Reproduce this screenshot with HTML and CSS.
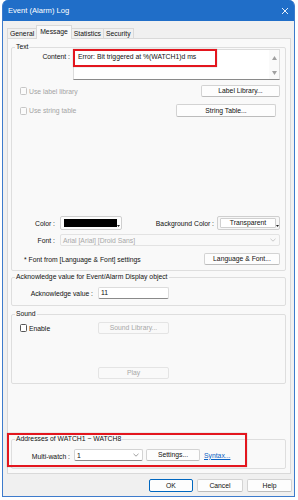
FILE: index.html
```html
<!DOCTYPE html>
<html lang="en">

<head>
    <meta charset="UTF-8">
    <meta name="viewport" content="width=device-width, initial-scale=1.0">
    <title>Event (Alarm) Log</title>
    <link rel="stylesheet" href="styles.css">
</head>

<body>
    <div class="window">
        <div class="titlebar">
            <span class="title">Event (Alarm) Log</span>
            <svg class="close" width="8" height="8" viewBox="0 0 8 8">
                <path d="M1 1L7 7M7 1L1 7" stroke="#fff" stroke-width="0.9" />
            </svg>
        </div>

        <div class="tabs">
            <div class="tab">General</div>
            <div class="tab active">Message</div>
            <div class="tab">Statistics</div>
            <div class="tab">Security</div>
        </div>

        <div class="panel">
            <!-- Text -->
            <fieldset class="group group-text">
                <legend>Text</legend>
                <div class="row row-content">
                    <div class="lbl lbl-content">Content :</div>
                    <div class="textbox">
                        <div class="textbox-text">Error: Bit triggered at %(WATCH1)d ms</div>
                        <div class="vscroll">
                            <svg width="5" height="4" viewBox="0 0 5 4"><path d="M2.5 0L5 4H0Z" fill="#a0a0a0" /></svg>
                            <svg width="5" height="4" viewBox="0 0 5 4"><path d="M0 0H5L2.5 4Z" fill="#a0a0a0" /></svg>
                        </div>
                    </div>
                </div>
                <div class="row row-check">
                    <div class="check disabled"><span class="cb"></span>Use label library</div>
                    <div class="btn btn-label">Label Library...</div>
                </div>
                <div class="row row-check row-string">
                    <div class="check disabled"><span class="cb"></span>Use string table</div>
                    <div class="btn btn-string">String Table...</div>
                </div>
                <div class="row row-color">
                    <div class="lbl lbl-short">Color :</div>
                    <div class="colorbox">
                        <div class="swatch"></div>
                        <svg class="drop" width="3" height="2" viewBox="0 0 3 2"><path d="M0 0H3L1.5 2Z" fill="#222" /></svg>
                    </div>
                    <div class="lbl-bg">Background Color :</div>
                    <div class="bgbtn">
                        <div class="bgbtn-face">Transparent</div>
                        <svg class="drop" width="3" height="2" viewBox="0 0 3 2"><path d="M0 0H3L1.5 2Z" fill="#222" /></svg>
                    </div>
                </div>
                <div class="row row-font">
                    <div class="lbl lbl-short">Font :</div>
                    <div class="select disabled">
                        <span>Arial [Arial] [Droid Sans]</span>
                        <svg width="6" height="4" viewBox="0 0 6 4"><path d="M0.5 0.8L3 3.2L5.5 0.8" fill="none" stroke="#b5b5b5" stroke-width="0.7" /></svg>
                    </div>
                </div>
                <div class="row row-note">
                    <span class="note">* Font from [Language &amp; Font] settings</span>
                    <div class="btn btn-lang">Language &amp; Font...</div>
                </div>
            </fieldset>

            <!-- Acknowledge -->
            <fieldset class="group group-ack">
                <legend>Acknowledge value for Event/Alarm Display object</legend>
                <div class="row row-ack">
                    <div class="lbl lbl-ack">Acknowledge value :</div>
                    <div class="input">11</div>
                </div>
            </fieldset>

            <!-- Sound -->
            <fieldset class="group group-sound">
                <legend>Sound</legend>
                <div class="row row-sound">
                    <div class="check check-enable"><span class="cb"></span>Enable</div>
                    <div class="btn btn-off">Sound Library...</div>
                </div>
                <div class="row row-play">
                    <div class="btn btn-off">Play</div>
                </div>
            </fieldset>

            <!-- Multi-watch -->
            <fieldset class="group group-watch">
                <legend>Addresses of WATCH1 ~ WATCH8</legend>
                <div class="row row-watch">
                    <div class="lbl lbl-content">Multi-watch :</div>
                    <div class="select select-watch">
                        <span>1</span>
                        <svg width="6" height="4" viewBox="0 0 6 4"><path d="M0.5 0.8L3 3.2L5.5 0.8" fill="none" stroke="#777" stroke-width="0.7" /></svg>
                    </div>
                    <div class="btn btn-settings">Settings...</div>
                    <a class="link" href="#">Syntax...</a>
                </div>
            </fieldset>
        </div>

        <div class="actions">
            <div class="btn btn-ok">OK</div>
            <div class="btn btn-cancel">Cancel</div>
            <div class="btn btn-help">Help</div>
        </div>
    </div>

    <!-- red annotation boxes -->
    <div class="mark mark-content"></div>
    <div class="mark mark-watch"></div>
</body>

</html>
```

FILE: styles.css
```css
* {
    box-sizing: border-box;
}

body {
    margin: 0;
    width: 298px;
    height: 500px;
    overflow: hidden;
    position: relative;
    background: #fff;
    font-family: "Liberation Sans", Arial, sans-serif;
    font-size: 6.8px;
    color: #111;
}

.window {
    margin-left: 2px;
    width: 293px;
    background: #f0f0f0;
    border: 1px solid #3d7bcc;
    border-top: none;
    border-radius: 6px 6px 0 0;
    display: flex;
    flex-direction: column;
}

.titlebar {
    height: 21px;
    background: #206ec8;
    border-radius: 5px 5px 0 0;
    display: flex;
    align-items: center;
    justify-content: space-between;
    padding: 0 5px;
    color: #fff;
}

.title {
    font-size: 7.6px;
}

/* tabs */
.tabs {
    display: flex;
    align-items: flex-end;
    height: 13px;
    margin-top: 4px;
    padding-left: 4px;
}

.tab {
    height: 10px;
    line-height: 9px;
    padding: 0 2px;
    border: 1px solid #d9d9d9;
    border-bottom: none;
    margin-right: -1px;
    background: #f0f0f0;
}

.tab.active {
    height: 14px;
    line-height: 12px;
    margin-bottom: -1px;
    padding: 0 3px;
    background: #f9f9f9;
    position: relative;
    z-index: 1;
}

.panel {
    margin: 0 3px 0 4px;
    padding: 4px 4px 4px 3px;
    background: #f9f9f9;
    border: 1px solid #d9d9d9;
}

/* group boxes */
.group {
    margin: 0;
    padding: 0;
    min-width: 0;
    border: 1px solid #dedede;
    border-radius: 2px;
}

.group legend {
    margin-left: 3px;
    padding: 0 1px;
    line-height: 8px;
}

.row {
    display: flex;
    align-items: center;
}

.lbl {
    text-align: right;
    flex-shrink: 0;
}

.lbl-content {
    width: 58px;
}

.lbl-short {
    width: 43px;
}

.btn {
    height: 12px;
    line-height: 10px;
    text-align: center;
    background: #fdfdfd;
    border: 1px solid #d3d3d3;
    border-bottom-color: #bcbcbc;
    border-radius: 2px;
    flex-shrink: 0;
}

.check {
    display: flex;
    align-items: center;
}

.cb {
    width: 7px;
    height: 8px;
    margin-right: 2px;
    border: 1px solid #c6c6c6;
    border-radius: 1.5px;
    background: #fbfbfb;
}

.check.disabled {
    color: #a4a4a4;
}

/* text group */
.row-content {
    margin-top: -2px;
    align-items: flex-start;
}

.lbl-content {
    line-height: 8px;
    padding-top: 4px;
}

.textbox {
    margin-left: 3px;
    width: 207px;
    height: 31px;
    display: flex;
    background: #fff;
    border: 1px solid #dcdcdc;
    border-bottom-color: #8a8a8a;
}

.textbox-text {
    flex: 1;
    padding: 3px 4px;
    line-height: 8px;
}

.vscroll {
    width: 10px;
    display: flex;
    flex-direction: column;
    justify-content: space-between;
    align-items: center;
    padding: 6px 0 4px;
    background: #fafafa;
}

.row-check {
    margin-top: 5px;
    height: 12px;
    justify-content: space-between;
    padding: 0 5px 0 8px;
}

.btn-label {
    width: 79px;
}

.row-string {
    margin-top: 7px;
    height: 13px;
    padding-right: 9px;
}

.btn-string {
    width: 100px;
    height: 13px;
    line-height: 11px;
}

.row-color {
    margin-top: 99px;
    height: 14px;
    padding-right: 5px;
}

.colorbox {
    margin-left: 5px;
    width: 62px;
    height: 14px;
    display: flex;
    align-items: flex-end;
    padding: 1px 1px 1px 3px;
    background: #fdfdfd;
    border: 1px solid #cfcfcf;
    border-radius: 2px;
}

.swatch {
    flex: 1;
    align-self: stretch;
    margin: 1px 0;
    background: #000;
}

.drop {
    margin: 0 0 1px 0;
}

.lbl-bg {
    margin-left: auto;
}

.bgbtn {
    margin-left: 3px;
    width: 63px;
    height: 14px;
    display: flex;
    align-items: flex-end;
    padding: 1px 0 1px 2px;
    border: 1px solid #cfcfcf;
    border-radius: 2px;
    background: #f7f7f7;
}

.bgbtn-face {
    flex: 1;
    align-self: stretch;
    text-align: center;
    line-height: 8px;
    background: #fff;
    border: 1px solid #d0d0d0;
    border-radius: 1px;
}

.row-font {
    margin-top: 4px;
    height: 12px;
}

.select {
    height: 12px;
    display: flex;
    align-items: center;
    justify-content: space-between;
    padding: 0 3px 0 2px;
    border: 1px solid #d3d3d3;
    border-radius: 2px;
    background: #fff;
}

.select.disabled {
    margin-left: 5px;
    width: 220px;
    color: #a8a8a8;
    background: #f9f9f9;
    border-color: #e3e3e3;
}

.row-note {
    margin-top: 7px;
    height: 12px;
    padding: 0 5px 0 12px;
    justify-content: space-between;
}

.btn-lang {
    width: 76px;
}

.group-text {
    padding-bottom: 5px;
}

/* acknowledge */
.group-ack {
    margin-top: 2px;
    padding-bottom: 6px;
}

.row-ack {
    margin-top: 6px;
}

.lbl-ack {
    width: 81px;
}

.input {
    margin-left: 5px;
    width: 71px;
    height: 12px;
    line-height: 10px;
    padding-left: 2px;
    background: #fff;
    border: 1px solid #dcdcdc;
    border-bottom-color: #8a8a8a;
    border-radius: 2px;
}

/* sound */
.group-sound {
    margin-top: 4px;
    padding-bottom: 4px;
}

.row-sound {
    margin-top: 4px;
}

.check-enable {
    width: 86px;
    padding-left: 8px;
}

.check-enable .cb {
    border-color: #555;
    background: #fff;
}

.btn-off {
    width: 71px;
    color: #a8a8a8;
    background: #f9f9f9;
    border-color: #e4e4e4;
}

.row-play {
    margin-top: 33px;
    padding-left: 86px;
}

/* multi-watch */
.group-watch {
    margin-top: 51px;
    padding-bottom: 7px;
}

.row-watch {
    margin-top: 6px;
}

.select-watch {
    margin-left: 4px;
    width: 69px;
    border-bottom-color: #8a8a8a;
}

.btn-settings {
    margin-left: 3px;
    width: 54px;
}

.link {
    margin-left: 4px;
    color: #0a62c4;
    text-decoration: underline;
}

/* bottom buttons */
.actions {
    display: flex;
    justify-content: flex-end;
    gap: 4px;
    margin: 5px 0 4px;
    padding-right: 2px;
}

.actions .btn {
    height: 13px;
    line-height: 11px;
}

.btn-ok {
    width: 44px;
    border-color: #0067c0;
}

.btn-cancel {
    width: 46px;
}

.btn-help {
    width: 45px;
}

/* annotations */
.mark {
    position: absolute;
    border: 2px solid #e3161e;
    box-shadow: 0 0 1px rgba(0, 0, 0, 0.35);
}

.mark-content {
    left: 73px;
    top: 49px;
    width: 144px;
    height: 18px;
}

.mark-watch {
    left: 7px;
    top: 433px;
    width: 240px;
    height: 34px;
}
```
